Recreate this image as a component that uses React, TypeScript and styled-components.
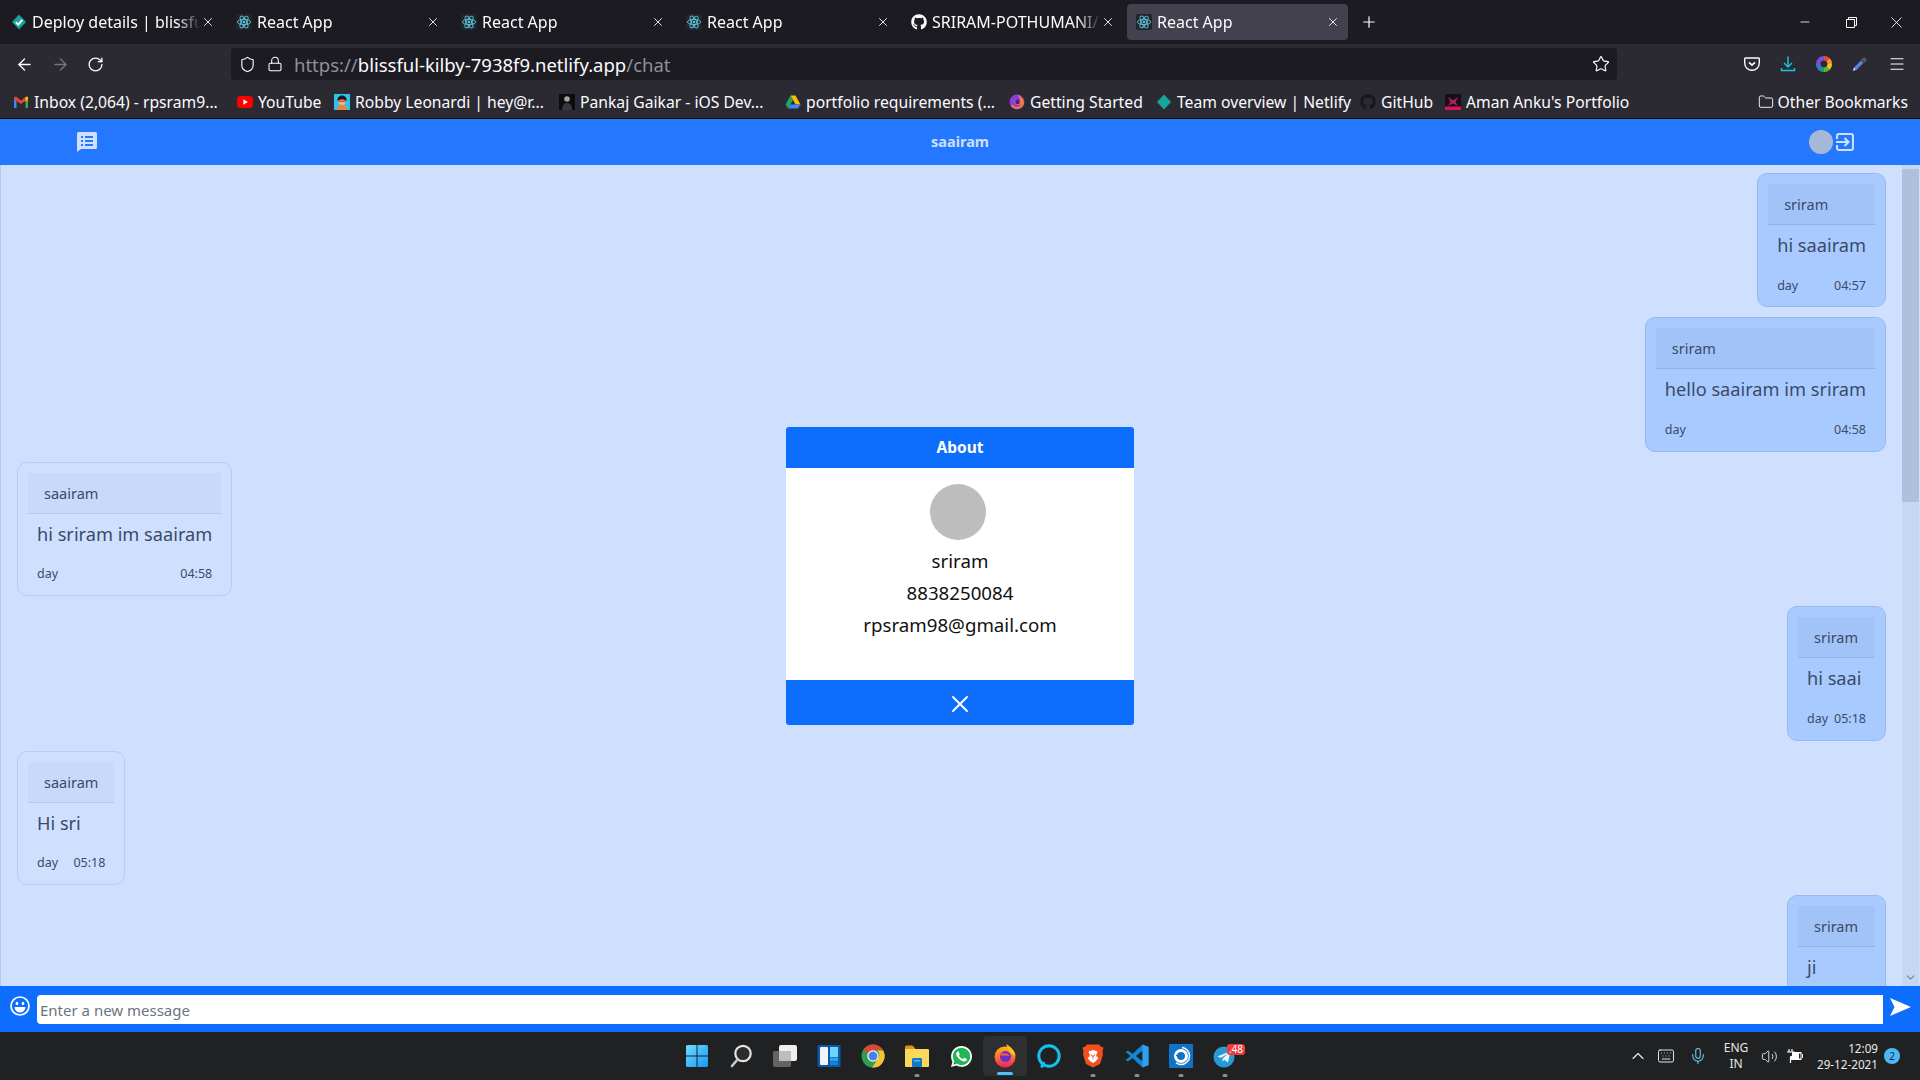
import React from 'react';
import styled, { createGlobalStyle } from 'styled-components';
import { ArrowLeft, ArrowRight, ChevronDown, ChevronUp, Folder, Keyboard, Lock, Menu, Mic, Minus, Plus, RotateCw, Shield, Star, Volume2, X } from 'lucide-react';
import { FaGithub, FaTelegramPlane, FaWhatsapp } from 'react-icons/fa';

const UI_FONT = `"Noto Sans", "Open Sans", "Liberation Sans", sans-serif`;

const ReactFavicon = () => (
  <svg width="16" height="16" viewBox="0 0 16 16">
    <rect width="16" height="16" rx="2" fill="#20262c" />
    <g fill="none" stroke="#5fc5dc" strokeWidth="0.9">
      <ellipse cx="8" cy="8" rx="6.6" ry="2.6" />
      <ellipse cx="8" cy="8" rx="6.6" ry="2.6" transform="rotate(60 8 8)" />
      <ellipse cx="8" cy="8" rx="6.6" ry="2.6" transform="rotate(120 8 8)" />
    </g>
    <circle cx="8" cy="8" r="1.3" fill="#5fc5dc" />
  </svg>
);

const NetlifyDiamond = ({ check }: { check?: boolean }) => (
  <svg width="16" height="16" viewBox="0 0 16 16">
    <path d="M8 .5 15 8l-7 7.500L1 8z" fill="#15a59a" />
    {check && <path d="M4.800 8.200 7.200 10.600 11.300 5.800" fill="none" stroke="#fff" strokeWidth="1.900" />}
  </svg>
);

const GmailIcon = () => (
  <svg width="16" height="16" viewBox="0 0 16 16">
    <path d="M1 3.500V14h2.500V7z" fill="#4285f4" />
    <path d="M15 3.500V14h-2.500V7z" fill="#34a853" />
    <path d="M1 3.500 3 2.500 8 6.500 13 2.500 15 3.500V5L8 10 1 5z" fill="#ea4335" />
    <path d="M12.500 3 15 2.800V6L12.500 7.800z" fill="#fbbc04" />
  </svg>
);

const YoutubeIcon = () => (
  <svg width="16" height="16" viewBox="0 0 16 16">
    <rect y="2" width="16" height="12" rx="3.500" fill="#f00" />
    <path d="M6.300 5.200 10.800 8l-4.500 2.800z" fill="#fff" />
  </svg>
);

const RobbyIcon = () => (
  <svg width="16" height="16" viewBox="0 0 16 16">
    <rect width="16" height="16" fill="#2ec4e8" />
    <path d="M3 16c0-4 2-5 5-5s5 1 5 5z" fill="#f0813a" />
    <circle cx="8" cy="7.500" r="3.500" fill="#f2b48c" />
    <path d="M3.500 7C3 3 6 1.500 8 1.500S13 3 12.500 7C10 5 6 5 3.500 7z" fill="#15151c" />
    <rect x="4.500" y="6.500" width="7" height="1.500" fill="#d8435f" />
  </svg>
);

const PankajIcon = () => (
  <svg width="16" height="16" viewBox="0 0 16 16">
    <rect width="16" height="16" fill="#0c0c0e" />
    <circle cx="8" cy="5" r="2.800" fill="#a5a29c" />
    <path d="M3 16c0-5 2-7 5-7s5 2 5 7z" fill="#34373f" />
  </svg>
);

const DriveIcon = () => (
  <svg width="16" height="16" viewBox="0 0 16 16">
    <path d="M10.500 1.500 15.500 10.500H10.500L5.500 1.500z" fill="#fbbc04" />
    <path d="M5.500 1.500 .5 10.500 3 14.500 8 6z" fill="#1fa463" />
    <path d="M3 14.500H13L15.500 10.500H5.500z" fill="#4285f4" />
  </svg>
);

const FoxSwirl = () => (
  <svg width="16" height="16" viewBox="0 0 16 16">
    <circle cx="8" cy="8" r="7.500" fill="#8a3fd8" />
    <path d="M2 12A7.500 7.500 0 0 0 15 9.500C15 5 12 2 8.500 1 11 4 11.500 6 10 7.500 8 5 5 6 5.500 8.500 6 11.500 10.500 12 12 9.500 12 13 6 14.500 3.500 10.500z" fill="#ff7a2e" />
    <circle cx="8.500" cy="8" r="2.400" fill="#4a1f9e" />
  </svg>
);

const AmanIcon = () => (
  <svg width="16" height="16" viewBox="0 0 16 16">
    <rect width="16" height="16" fill="#1a0c1a" />
    <rect y="12.500" width="16" height="3.500" fill="#d31757" />
    <path d="M3 3 8 6.500 13 3 10.500 8 13 12 8 9.500 3 12 5.500 8z" fill="#c21b54" />
    <circle cx="8" cy="7.500" r="1.600" fill="#55505a" />
  </svg>
);

const PocketIcon = () => (
  <svg width="16" height="16" viewBox="0 0 16 16" fill="none" stroke="#fbfbfe" strokeWidth="1.400">
    <path d="M1.500 2h13a.8.8 0 0 1 .8.8V7a7.300 7.300 0 0 1-14.600 0V2.800a.8.8 0 0 1 .8-.8z" />
    <path d="M5 6.300 8 9.200l3-2.900" strokeWidth="1.600" />
  </svg>
);

const DownloadIcon = () => (
  <svg width="16" height="16" viewBox="0 0 16 16" fill="none" stroke="#18c5e8" strokeWidth="1.400">
    <path d="M8 .5v10M4 7l4 4 4-4M1.500 12v2.500h13V12" />
  </svg>
);

const ColorWheel = () => (
  <svg width="16" height="16" viewBox="0 0 16 16" fill="none" strokeWidth="4.400">
    <circle cx="8" cy="8" r="5.800" stroke="#7c4fd0" />
    <path d="M8 2.200a5.800 5.800 0 0 1 4.100 1.700" stroke="#e8453c" />
    <path d="M12.100 3.900A5.800 5.800 0 0 1 13.800 8" stroke="#f59b1b" />
    <path d="M13.800 8a5.800 5.800 0 0 1-1.700 4.100" stroke="#f3c514" />
    <path d="M12.100 12.100A5.800 5.800 0 0 1 8 13.800" stroke="#5cb531" />
    <path d="M8 13.800a5.800 5.800 0 0 1-4.100-1.700" stroke="#1f9d68" />
    <path d="M3.900 12.100A5.800 5.800 0 0 1 2.200 8" stroke="#3f6fd8" />
  </svg>
);

const Eyedropper = () => (
  <svg width="16" height="16" viewBox="0 0 16 16">
    <path d="M1 15 2 11.500 9 4.500 11.500 7 4.500 14z" fill="#5b7fe0" />
    <path d="M9 3.500 12.500 7 15 3.500 12.500 1z" fill="#55585f" />
    <path d="M1 15l1-3.500 1.500 2z" fill="#dfe6ff" />
  </svg>
);

const RestoreIcon = () => (
  <svg width="11" height="11" viewBox="0 0 11 11" fill="none" stroke="#fbfbfe">
    <path d="M.5 2.500h8v8h-8z" />
    <path d="M2.500 2.500v-2h8v8h-2" />
  </svg>
);

const CloseThin = () => (
  <svg width="11" height="11" viewBox="0 0 11 11" stroke="#fbfbfe" strokeWidth="0.900">
    <path d="M.5.5l10 10M10.500.5l-10 10" />
  </svg>
);

const ChatListIcon = () => (
  <svg width="20" height="20" viewBox="0 0 20 20">
    <path d="M1.500 0h17A1.500 1.500 0 0 1 20 1.500v14a1.500 1.500 0 0 1-1.500 1.500H4L0 20V1.500A1.500 1.500 0 0 1 1.500 0z" fill="#cfe0fe" />
    <path d="M4 4h2v2H4zm4 0h8v2H8zM4 8h2v2H4zm4 0h8v2H8zM4 12h2v2H4zm4 0h8v2H8z" fill="#2478ff" />
  </svg>
);

const LogoutIcon = () => (
  <svg width="18" height="18" viewBox="0 0 18 18" fill="none" stroke="#cfe0fe" strokeWidth="2.100">
    <path d="M1 6V3a2 2 0 0 1 2-2h12a2 2 0 0 1 2 2v12a2 2 0 0 1-2 2H3a2 2 0 0 1-2-2v-3" />
    <path d="M0 9h12M8.500 5l4 4-4 4" />
  </svg>
);

const EmojiIcon = () => (
  <svg width="20" height="20" viewBox="0 0 20 20">
    <circle cx="10" cy="10" r="9" fill="none" stroke="#fff" strokeWidth="1.700" />
    <ellipse cx="7" cy="7.500" rx="1.300" ry="1.800" fill="#fff" />
    <ellipse cx="13" cy="7.500" rx="1.300" ry="1.800" fill="#fff" />
    <path d="M4.500 11h11a5.500 5.500 0 0 1-11 0z" fill="#fff" />
  </svg>
);

const SendIcon = () => (
  <svg width="21" height="18" viewBox="0 0 21 18">
    <path d="M0 0 21 9 0 18 4.500 9z" fill="#fff" />
  </svg>
);

const WindowsIcon = () => (
  <svg width="24" height="24" viewBox="0 0 24 24">
    <defs>
      <linearGradient id="winTile" x1="0" y1="0" x2="1" y2="1">
        <stop offset="0" stopColor="#6fdcff" />
        <stop offset="1" stopColor="#1499f5" />
      </linearGradient>
    </defs>
    <path d="M1 2.500A1.500 1.500 0 0 1 2.500 1h9v10.500H1zM12.500 1h9A1.500 1.500 0 0 1 23 2.500v9H12.500zM1 12.500h10.500V23h-9A1.500 1.500 0 0 1 1 21.500zM12.500 12.500H23v9a1.500 1.500 0 0 1-1.500 1.500h-9z" fill="url(#winTile)" />
  </svg>
);

const SearchIcon = () => (
  <svg width="24" height="24" viewBox="0 0 24 24" fill="none">
    <circle cx="14" cy="9.500" r="7.700" fill="#2a2c2e" stroke="#e4e4e4" strokeWidth="2.200" />
    <path d="M8.500 15.500 3 22" stroke="#c8c8c8" strokeWidth="2.600" strokeLinecap="round" />
  </svg>
);

const TaskViewIcon = () => (
  <svg width="26" height="24" viewBox="0 0 26 24">
    <rect x="7" y="1" width="18" height="16" rx="2" fill="#efefef" />
    <rect x="1" y="7" width="18" height="16" rx="2" fill="#6a6a6a" fillOpacity="0.920" />
    <rect x="7" y="7" width="12" height="10" fill="#bdbdbd" />
  </svg>
);

const WidgetsIcon = () => (
  <svg width="24" height="24" viewBox="0 0 24 24">
    <rect x="0.500" y="1" width="23" height="22" rx="1" fill="#0b58a8" />
    <rect x="3" y="3" width="8" height="18" rx="1" fill="#f2f5f8" />
    <rect x="13" y="3" width="8" height="10" fill="#6bd4fb" />
    <rect x="13" y="13.500" width="8" height="3.500" fill="#2aa4ec" />
    <rect x="13" y="17.500" width="8" height="3.500" fill="#1883d8" />
  </svg>
);

const ChromeIcon = () => (
  <svg width="24" height="24" viewBox="0 0 24 24">
    <circle cx="12" cy="12" r="11.500" fill="#2f9e50" />
    <path d="M2.600 5.500A11.500 11.500 0 0 1 22.200 6.500H12a5.600 5.600 0 0 0-5.300 3.600z" fill="#de4637" />
    <path d="M22.200 6.500A11.500 11.500 0 0 1 11 23.500L16.800 15a5.600 5.600 0 0 0-.8-8.500z" fill="#f6c52e" />
    <circle cx="12" cy="12" r="5.700" fill="#fff" />
    <circle cx="12" cy="12" r="4.500" fill="#4a80ea" />
  </svg>
);

const ExplorerIcon = () => (
  <svg width="24" height="22" viewBox="0 0 24 22">
    <path d="M0 2a1.500 1.500 0 0 1 1.500-1.500h6L10 3v3H0z" fill="#d99a12" />
    <rect y="4" width="24" height="18" rx="1" fill="#fbd75b" />
    <rect x="7" y="13" width="10" height="9" rx="1.200" fill="#1478c8" />
    <rect x="9" y="15" width="6" height="1.500" fill="#54b4f0" />
  </svg>
);

const WhatsappIcon = () => (
  <svg width="25" height="25" viewBox="0 0 25 25">
    <circle cx="12.500" cy="12.500" r="9.800" fill="#22b755" />
    <g transform="translate(.5 .5)"><FaWhatsapp size={24} color="#fff" /></g>
  </svg>
);

const FirefoxIcon = () => (
  <svg width="24" height="24" viewBox="0 0 24 24">
    <defs>
      <linearGradient id="foxBody" x1="0.500" y1="0" x2="0.500" y2="1">
        <stop offset="0" stopColor="#ffb21f" />
        <stop offset="0.550" stopColor="#ff6a2a" />
        <stop offset="1" stopColor="#e8206a" />
      </linearGradient>
    </defs>
    <circle cx="12" cy="13" r="10.500" fill="url(#foxBody)" />
    <path d="M13 0c4 2.500 9 6 9.500 12L17 9c-1-3-3-6-4-9z" fill="#ffc21f" />
    <circle cx="12.500" cy="12.500" r="5.500" fill="#6a2dc8" />
    <path d="M7 11c3-2.500 7-2 9.500.5-2 .5-4 0-5.500 0-1.500 0-3 .5-4-.5z" fill="#f56a30" />
  </svg>
);

const AlexaIcon = () => (
  <svg width="24" height="24" viewBox="0 0 24 24" fill="none">
    <circle cx="12" cy="12" r="10.200" stroke="#0fc3ee" strokeWidth="3" />
    <path d="M4.500 23.500 7 18" stroke="#0fc3ee" strokeWidth="3" />
  </svg>
);

const BraveIcon = () => (
  <svg width="22" height="24" viewBox="0 0 22 24">
    <path d="M5 .5h12l2 2.300 2.500.7-1 4 .5 3-3 9.500L11 23.500 4 20 1 10.500l.5-3-1-4 2.500-.7z" fill="#f4501e" />
    <path d="M6.500 7.500 11 6l4.500 1.500-1.500 4.500 2.500 2-3 3.500L11 19l-2.500-1.500-3-3.500 2.500-2z" fill="#fff" />
    <path d="M8.500 10 10.500 11 11 14l.5-3 2-1-2 3.500L11 16l-.500-2.500z" fill="#f4501e" />
  </svg>
);

const VscodeIcon = () => (
  <svg width="24" height="24" viewBox="0 0 24 24">
    <path d="M17.500.5 23.500 3v18l-6 2.500L7.500 14l-4.500 3.500L.5 16l5-4-5-4L3 6.500 7.500 10z" fill="#1185d6" />
    <path d="M17.500 6.500 11 12l6.500 5.500z" fill="#1f2123" />
    <path d="M17.500.5 23.500 3v18l-6 2.500z" fill="#30a0ee" />
  </svg>
);

const DiskIcon = () => (
  <svg width="24" height="24" viewBox="0 0 24 24" fill="none">
    <rect width="24" height="24" rx="1" fill="#0f74c6" />
    <circle cx="12" cy="12" r="5.500" stroke="#fff" strokeWidth="3" />
    <path d="M13 3.500A8.600 8.600 0 0 1 20.500 12c0 4.700-3.800 8.500-8.500 8.500-2 0-3.700-.7-5-1.800" stroke="#fff" strokeWidth="1.500" />
    <path d="M7 11.500h4" stroke="#0f74c6" strokeWidth="1.500" />
  </svg>
);

const TelegramIcon = () => (
  <svg width="24" height="24" viewBox="0 0 24 24">
    <circle cx="11" cy="13" r="10.500" fill="#289ad6" />
    <g transform="translate(4 6)"><FaTelegramPlane size={14} color="#eaf6fc" /></g>
  </svg>
);

const BatteryIcon = () => (
  <svg width="16" height="14" viewBox="0 0 16 14" fill="#fff">
    <path d="M2 0v3M5 0v3M0 3h7v2.500L4.500 8H3.500v6" stroke="#fff" fill="none" strokeWidth="1.200" />
    <path d="M5 3h9.500v8H3.500V7H5z" />
    <rect x="15" y="5" width="1" height="4" />
    <rect x="12" y="4.500" width="1.500" height="5" fill="#1f2123" />
  </svg>
);

type TabData = { title: string; icon: React.ReactNode; active?: boolean };

const tabs: TabData[] = [
  { title: 'Deploy details | blissful', icon: <NetlifyDiamond check /> },
  { title: 'React App', icon: <ReactFavicon /> },
  { title: 'React App', icon: <ReactFavicon /> },
  { title: 'React App', icon: <ReactFavicon /> },
  { title: 'SRIRAM-POTHUMANI/', icon: <FaGithub size={16} color="#fbfbfe" /> },
  { title: 'React App', icon: <ReactFavicon />, active: true },
];

const bookmarks = [
  { label: 'Inbox (2,064) - rpsram9...', icon: <GmailIcon />, width: 224 },
  { label: 'YouTube', icon: <YoutubeIcon />, width: 97 },
  { label: 'Robby Leonardi | hey@r...', icon: <RobbyIcon />, width: 225 },
  { label: 'Pankaj Gaikar - iOS Dev...', icon: <PankajIcon />, width: 226 },
  { label: 'portfolio requirements (...', icon: <DriveIcon />, width: 224 },
  { label: 'Getting Started', icon: <FoxSwirl />, width: 147 },
  { label: 'Team overview | Netlify', icon: <NetlifyDiamond />, width: 204 },
  { label: 'GitHub', icon: <FaGithub size={16} color="#17161c" />, width: 85 },
  { label: "Aman Anku's Portfolio", icon: <AmanIcon />, width: 200 },
];

type Message = { id: number; author: string; text: string; time: string; mine?: boolean };

const messages: Message[] = [
  { id: 1, author: 'sriram', text: 'hi saairam', time: '04:57', mine: true },
  { id: 2, author: 'sriram', text: 'hello saairam im sriram', time: '04:58', mine: true },
  { id: 3, author: 'saairam', text: 'hi sriram im saairam', time: '04:58' },
  { id: 4, author: 'sriram', text: 'hi saai', time: '05:18', mine: true },
  { id: 5, author: 'saairam', text: 'Hi sri', time: '05:18' },
  { id: 6, author: 'sriram', text: 'ji', time: '05:19', mine: true },
];

const taskItems: { key: string; icon: React.ReactNode; state?: 'open' | 'active'; badge?: string }[] = [
  { key: 'start', icon: <WindowsIcon /> },
  { key: 'search', icon: <SearchIcon /> },
  { key: 'taskview', icon: <TaskViewIcon /> },
  { key: 'widgets', icon: <WidgetsIcon /> },
  { key: 'chrome', icon: <ChromeIcon /> },
  { key: 'explorer', icon: <ExplorerIcon />, state: 'open' },
  { key: 'whatsapp', icon: <WhatsappIcon /> },
  { key: 'firefox', icon: <FirefoxIcon />, state: 'active' },
  { key: 'alexa', icon: <AlexaIcon /> },
  { key: 'brave', icon: <BraveIcon />, state: 'open' },
  { key: 'vscode', icon: <VscodeIcon />, state: 'open' },
  { key: 'disk', icon: <DiskIcon />, state: 'open' },
  { key: 'telegram', icon: <TelegramIcon />, state: 'open', badge: '.48' },
];

const App: React.FC = () => {
  return (
    <Screen>
      <GlobalStyle />
      <TabStrip>
        {tabs.map((tab, i) => (
          <Tab key={i} $active={tab.active}>
            <TabIcon>{tab.icon}</TabIcon>
            <TabTitle>{tab.title}</TabTitle>
            <X size={14} strokeWidth={1.5} color="#fbfbfe" />
          </Tab>
        ))}
        <NewTab>
          <Plus size={18} strokeWidth={1.6} color="#fbfbfe" />
        </NewTab>
        <WindowControls>
          <Minus size={14} strokeWidth={1.4} color="#fbfbfe" />
          <RestoreIcon />
          <CloseThin />
        </WindowControls>
      </TabStrip>

      <Toolbar>
        <NavButtons>
          <ArrowLeft size={19} strokeWidth={1.7} color="#fbfbfe" />
          <ArrowRight size={19} strokeWidth={1.7} color="#77767d" />
          <RotateCw size={17} strokeWidth={1.8} color="#fbfbfe" />
        </NavButtons>
        <UrlBar>
          <Shield size={17} strokeWidth={1.6} color="#fbfbfe" />
          <Lock size={16} strokeWidth={1.6} color="#fbfbfe" />
          <UrlText>
            https://<UrlHost>blissful-kilby-7938f9.netlify.app</UrlHost>/chat
          </UrlText>
          <UrlStar>
            <Star size={18} strokeWidth={1.6} color="#fbfbfe" />
          </UrlStar>
        </UrlBar>
        <ToolIcons>
          <PocketIcon />
          <DownloadIcon />
          <ColorWheel />
          <Eyedropper />
          <Menu size={18} strokeWidth={1.5} color="#fbfbfe" />
        </ToolIcons>
      </Toolbar>

      <BookmarksBar>
        {bookmarks.map(b => (
          <Bookmark key={b.label} $width={b.width}>
            <BookmarkIcon>{b.icon}</BookmarkIcon>
            {b.label}
          </Bookmark>
        ))}
        <OtherBookmarks>
          <Folder size={16} strokeWidth={1.4} color="#fbfbfe" />
          Other Bookmarks
        </OtherBookmarks>
      </BookmarksBar>

      <ChatPage>
        <NavBar>
          <NavChat>
            <ChatListIcon />
          </NavChat>
          <NavTitle>saairam</NavTitle>
          <NavRight>
            <NavAvatar />
            <LogoutIcon />
          </NavRight>
        </NavBar>

        <ChatBody>
          <MessageList>
            {messages.map(m => (
              <Bubble key={m.id} $mine={m.mine}>
                <BubbleHeader $mine={m.mine}>{m.author}</BubbleHeader>
                <BubbleText>{m.text}</BubbleText>
                <BubbleFooter>
                  <span>day</span>
                  <span>{m.time}</span>
                </BubbleFooter>
              </Bubble>
            ))}
          </MessageList>
          <Scrollbar>
            <ScrollThumb />
            <ScrollArrow>
              <ChevronDown size={13} strokeWidth={2.6} color="#7f8da8" />
            </ScrollArrow>
          </Scrollbar>
        </ChatBody>

        <InputBar>
          <EmojiSlot>
            <EmojiIcon />
          </EmojiSlot>
          <MessageInput placeholder="Enter a new message" readOnly />
          <SendSlot>
            <SendIcon />
          </SendSlot>
        </InputBar>

        <ModalLayer>
          <Modal>
            <ModalHeader>About</ModalHeader>
            <ModalBody>
              <ModalAvatar />
              <ModalLine>sriram</ModalLine>
              <ModalLine>8838250084</ModalLine>
              <ModalLine>rpsram98@gmail.com</ModalLine>
            </ModalBody>
            <ModalFooter>
              <X size={28} strokeWidth={1.6} color="#fff" />
            </ModalFooter>
          </Modal>
        </ModalLayer>
      </ChatPage>

      <Taskbar>
        <TaskIcons>
          {taskItems.map(item => (
            <TaskItem key={item.key} $state={item.state}>
              {item.icon}
              {item.badge && <TaskBadge>{item.badge}</TaskBadge>}
            </TaskItem>
          ))}
        </TaskIcons>
        <Tray>
          <TrayIcon $width={28}>
            <ChevronUp size={20} strokeWidth={1.4} color="#e8e8e8" />
          </TrayIcon>
          <TrayIcon $width={28}>
            <Keyboard size={18} strokeWidth={1.3} color="#e8e8e8" />
          </TrayIcon>
          <TrayIcon $width={36}>
            <Mic size={18} strokeWidth={1.5} color="#6cc4e0" />
          </TrayIcon>
          <LangBox>
            <span>ENG</span>
            <span>IN</span>
          </LangBox>
          <TrayIcon $width={26}>
            <Volume2 size={17} strokeWidth={1.3} color="#e8e8e8" />
          </TrayIcon>
          <TrayIcon $width={26}>
            <BatteryIcon />
          </TrayIcon>
          <Clock>
            <span>12:09</span>
            <span>29-12-2021</span>
          </Clock>
          <NotifyDot>2</NotifyDot>
        </Tray>
      </Taskbar>
    </Screen>
  );
};

const GlobalStyle = createGlobalStyle`
  html, body {
    margin: 0;
    padding: 0;
    overflow: hidden;
    background: #1c1b22;
  }
  * {
    box-sizing: border-box;
  }
`;

const Screen = styled.div`
  width: 1920px;
  height: 1080px;
  display: flex;
  flex-direction: column;
  overflow: hidden;
  font-family: ${UI_FONT};
`;

const TabStrip = styled.div`
  height: 44px;
  flex: none;
  display: flex;
  align-items: center;
  gap: 4px;
  padding-left: 2px;
  background: #1c1b22;
`;

const Tab = styled.div<{ $active?: boolean }>`
  width: 221px;
  height: 36px;
  display: flex;
  align-items: center;
  padding: 0 8px 0 9px;
  border-radius: 4px;
  color: #fbfbfe;
  font-size: 16px;
  background: ${({ $active }) => ($active ? '#42414d' : 'transparent')};
`;

const TabIcon = styled.span`
  width: 21px;
  height: 16px;
  flex: none;
  display: flex;
`;

const TabTitle = styled.span`
  flex: 1;
  min-width: 0;
  overflow: hidden;
  white-space: nowrap;
  mask-image: linear-gradient(to left, transparent 0, #000 24px);
`;

const NewTab = styled.div`
  width: 32px;
  height: 32px;
  margin-left: 1px;
  display: flex;
  align-items: center;
  justify-content: center;
`;

const WindowControls = styled.div`
  margin-left: auto;
  display: flex;
  align-items: center;
  gap: 34px;
  padding-right: 18px;
`;

const Toolbar = styled.div`
  height: 36px;
  flex: none;
  display: flex;
  align-items: flex-end;
  background: #2b2a33;
`;

const NavButtons = styled.div`
  width: 231px;
  height: 32px;
  padding: 0 15px 0 15px;
  display: flex;
  align-items: center;
  gap: 17px;
`;

const UrlBar = styled.div`
  width: 1386px;
  height: 32px;
  display: flex;
  align-items: center;
  padding: 0 7px 0 8px;
  gap: 11px;
  border-radius: 4px;
  background: #1c1b22;
`;

const UrlText = styled.span`
  font-size: 18.500px;
  color: #8f8f9d;
`;

const UrlHost = styled.span`
  color: #fbfbfe;
`;

const UrlStar = styled.span`
  margin-left: auto;
  display: flex;
`;

const ToolIcons = styled.div`
  flex: 1;
  height: 32px;
  display: flex;
  align-items: center;
  gap: 20px;
  padding-left: 127px;
`;

const BookmarksBar = styled.div`
  height: 39px;
  flex: none;
  display: flex;
  align-items: center;
  padding: 5px 0 0 13px;
  background: #2b2a33;
  border-bottom: 1px solid #0c0c0d;
`;

const Bookmark = styled.div<{ $width: number }>`
  width: ${({ $width }) => $width}px;
  flex: none;
  display: flex;
  align-items: center;
  white-space: nowrap;
  color: #fbfbfe;
  font-size: 15.700px;
`;

const BookmarkIcon = styled.span`
  width: 21px;
  height: 16px;
  flex: none;
  display: flex;
`;

const OtherBookmarks = styled.div`
  margin-left: auto;
  padding-right: 12px;
  display: flex;
  align-items: center;
  gap: 4px;
  color: #fbfbfe;
  font-size: 15.700px;
  white-space: nowrap;
`;

const ChatPage = styled.div`
  position: relative;
  flex: 1;
  min-height: 0;
  display: flex;
  flex-direction: column;
`;

const NavBar = styled.div`
  height: 46px;
  flex: none;
  display: grid;
  grid-template-columns: 1fr auto 1fr;
  align-items: center;
  background: #2478ff;
`;

const NavChat = styled.div`
  display: flex;
  padding-left: 77px;
`;

const NavTitle = styled.div`
  padding-bottom: 2px;
  font-size: 14.500px;
  font-weight: 700;
  color: #cfe0fe;
`;

const NavRight = styled.div`
  display: flex;
  justify-content: flex-end;
  align-items: center;
  gap: 3px;
  padding-right: 66px;
`;

const NavAvatar = styled.div`
  width: 24px;
  height: 24px;
  border-radius: 50%;
  background: #a6b8d8;
`;

const ChatBody = styled.div`
  flex: 1;
  min-height: 0;
  display: flex;
  background: #cfe0fe;
  border-left: 1px solid #b8c9e8;
  overflow: hidden;
`;

const MessageList = styled.div`
  flex: 1;
  min-width: 0;
  display: flex;
  flex-direction: column;
  gap: 10px;
  padding: 8px 16px 0 16px;
`;

const Bubble = styled.div<{ $mine?: boolean }>`
  flex: none;
  align-self: ${({ $mine }) => ($mine ? 'flex-end' : 'flex-start')};
  padding: 10px;
  height: 134.400px;
  border-radius: 10px;
  border: 1px solid ${({ $mine }) => ($mine ? '#98b9ee' : '#bccde9')};
  background: ${({ $mine }) => ($mine ? '#a9caff' : '#cfe0ff')};
  color: #3a4a68;
`;

const BubbleHeader = styled.div<{ $mine?: boolean }>`
  height: 41px;
  padding: 0 16px;
  display: flex;
  align-items: center;
  font-size: 14.500px;
  border-bottom: 1px solid ${({ $mine }) => ($mine ? '#92b3e6' : '#b8c9e8')};
  background: ${({ $mine }) => ($mine ? '#a2c3f7' : '#c8d9f9')};
`;

const BubbleText = styled.div`
  padding: 5px 9px 13px;
  font-size: 18.200px;
  line-height: 30px;
  white-space: nowrap;
`;

const BubbleFooter = styled.div`
  height: 24px;
  padding: 0 9px;
  display: flex;
  align-items: center;
  justify-content: space-between;
  gap: 6px;
  font-size: 12.500px;
`;

const Scrollbar = styled.div`
  width: 17px;
  margin-right: 1px;
  flex: none;
  display: flex;
  flex-direction: column;
  padding-top: 4px;
  background: #c6d7f2;
`;

const ScrollThumb = styled.div`
  height: 333px;
  background: #afc0dc;
`;

const ScrollArrow = styled.div`
  margin-top: auto;
  height: 17px;
  display: flex;
  align-items: center;
  justify-content: center;
`;

const InputBar = styled.div`
  height: 46px;
  flex: none;
  display: flex;
  align-items: flex-start;
  padding-top: 9px;
  background: #0d6efd;
`;

const EmojiSlot = styled.div`
  width: 37px;
  padding: 1px 0 0 10px;
  display: flex;
`;

const MessageInput = styled.input`
  width: 1846px;
  height: 29px;
  padding: 0 3px;
  border: 0;
  border-radius: 4px 0 0 4px;
  outline: 0;
  background: #fff;
  font-family: ${UI_FONT};
  font-size: 15px;

  &::placeholder {
    color: #6c757d;
    opacity: 1;
  }
`;

const SendSlot = styled.div`
  flex: 1;
  padding: 3px 0 0 7px;
  display: flex;
`;

const ModalLayer = styled.div`
  position: absolute;
  inset: 0;
  display: flex;
  align-items: center;
  justify-content: center;
`;

const Modal = styled.div`
  width: 348px;
  height: 298px;
  display: flex;
  flex-direction: column;
  border-radius: 3px;
  overflow: hidden;
  background: #fff;
`;

const ModalHeader = styled.div`
  height: 41px;
  flex: none;
  display: flex;
  align-items: center;
  justify-content: center;
  font-size: 15.500px;
  font-weight: 700;
  color: #fff;
  background: #0d6efd;
`;

const ModalBody = styled.div`
  flex: 1;
  display: flex;
  flex-direction: column;
  align-items: center;
  padding-top: 16px;
  color: #111;
`;

const ModalAvatar = styled.div`
  width: 56px;
  height: 56px;
  margin: 0 4px 5px 0;
  border-radius: 50%;
  background: #bdbdbd;
`;

const ModalLine = styled.div`
  font-size: 18.700px;
  line-height: 32px;
`;

const ModalFooter = styled.div`
  height: 45px;
  flex: none;
  display: flex;
  align-items: center;
  justify-content: center;
  padding-top: 3px;
  background: #0d6efd;
`;

const Taskbar = styled.div`
  height: 48px;
  flex: none;
  display: flex;
  align-items: stretch;
  padding-left: 675px;
  background: #1f2123;
`;

const TaskIcons = styled.div`
  display: flex;
  align-items: flex-start;
  padding-top: 4px;
`;

const TaskItem = styled.div<{ $state?: 'open' | 'active' }>`
  position: relative;
  width: 44px;
  height: 40px;
  display: flex;
  align-items: center;
  justify-content: center;
  border-radius: 4px;
  background: ${({ $state }) => ($state === 'active' ? '#2d2f31' : 'transparent')};

  &::after {
    content: '';
    display: ${({ $state }) => ($state ? 'block' : 'none')};
    position: absolute;
    left: 50%;
    bottom: ${({ $state }) => ($state === 'active' ? '1px' : '-1px')};
    width: ${({ $state }) => ($state === 'active' ? '16px' : '5px')};
    height: 3px;
    border-radius: 2px;
    transform: translateX(-50%);
    background: ${({ $state }) => ($state === 'active' ? '#4cc2ff' : '#8b8d8f')};
  }
`;

const TaskBadge = styled.span`
  position: absolute;
  top: 8px;
  right: 2px;
  padding: 0 2px;
  border-radius: 3px;
  font-size: 10px;
  line-height: 11px;
  color: #fff;
  background: #f03a3a;
`;

const Tray = styled.div`
  margin-left: auto;
  display: flex;
  align-items: center;
  padding-right: 20px;
`;

const TrayIcon = styled.div<{ $width: number }>`
  width: ${({ $width }) => $width}px;
  display: flex;
  align-items: center;
  justify-content: center;
`;

const LangBox = styled.div`
  width: 40px;
  display: flex;
  flex-direction: column;
  align-items: center;
  color: #e8e8e8;
  font-size: 12px;
  line-height: 16px;
`;

const Clock = styled.div`
  width: 70px;
  display: flex;
  flex-direction: column;
  align-items: flex-end;
  color: #e8e8e8;
  font-size: 11.700px;
  line-height: 16px;
  white-space: nowrap;
`;

const NotifyDot = styled.div`
  width: 16px;
  height: 16px;
  margin-left: 6px;
  display: flex;
  align-items: center;
  justify-content: center;
  border-radius: 50%;
  font-size: 10px;
  color: #14222e;
  background: #4cb8f5;
`;

export default App;
